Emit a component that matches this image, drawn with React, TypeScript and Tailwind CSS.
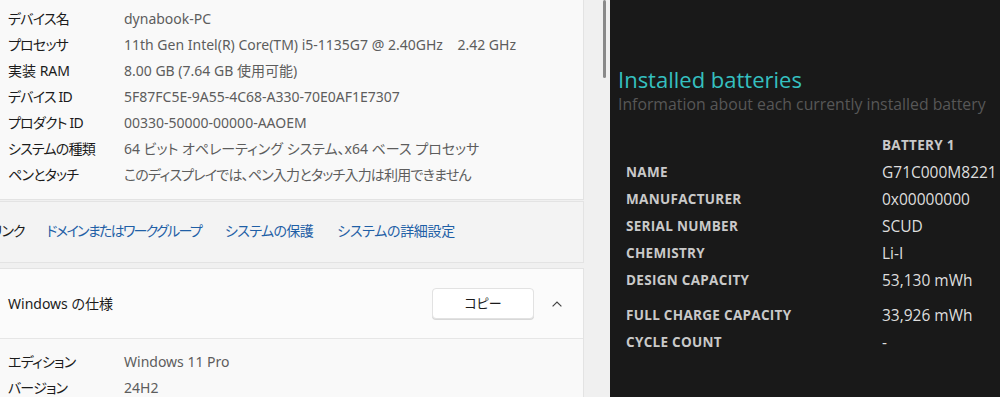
const jp = { fontFamily: '"Noto Sans", "Noto Sans CJK JP", sans-serif' };
const en = { fontFamily: '"Open Sans", "Noto Sans", sans-serif' };

// [label, value, tighten label, tighten value]
const specs: [string, string, boolean, boolean][] = [
  ["デバイス名", "dynabook-PC", true, false],
  ["プロセッサ", "11th Gen Intel(R) Core(TM) i5-1135G7 @ 2.40GHz    2.42 GHz", true, false],
  ["実装 RAM", "8.00 GB (7.64 GB 使用可能)", false, false],
  ["デバイス ID", "5F87FC5E-9A55-4C68-A330-70E0AF1E7307", true, false],
  ["プロダクト ID", "00330-50000-00000-AAOEM", true, false],
  ["システムの種類", "64 ビット オペレーティング システム、x64 ベース プロセッサ", true, false],
  ["ペンとタッチ", "このディスプレイでは、ペン入力とタッチ入力は利用できません", true, true],
];

const windowsSpecs: [string, string, boolean, boolean][] = [
  ["エディション", "Windows 11 Pro", true, false],
  ["バージョン", "24H2", true, false],
];

const battery = [
  ["NAME", "G71C000M8221", false],
  ["MANUFACTURER", "0x00000000", false],
  ["SERIAL NUMBER", "SCUD", false],
  ["CHEMISTRY", "Li-I", false],
  ["DESIGN CAPACITY", "53,130 mWh", false],
  ["FULL CHARGE CAPACITY", "33,926 mWh", true],
  ["CYCLE COUNT", "-", false],
] as const;

function SpecRow({ label, value, tl, tv }: { label: string; value: string; tl: boolean; tv: boolean }) {
  return (
    <div className="flex h-[26px] items-center text-[14px] whitespace-pre">
      <div className={`w-[116px] shrink-0 text-[#1b1b1b] ${tl ? "tracking-[-0.8px]" : ""}`}>{label}</div>
      <div className={`text-[#5d5d5d] ${tv ? "tracking-[-0.8px]" : ""}`}>{value}</div>
    </div>
  );
}

export default function App() {
  return (
    <div className="flex h-[397px] w-[1000px] overflow-hidden">
      {/* Settings page */}
      <div className="relative flex w-[610px] shrink-0 bg-[#f0f0f0] [font-feature-settings:'palt']" style={jp}>
        <div className="flex w-[584px] shrink-0 flex-col overflow-hidden">
          {/* Device specs card */}
          <div className="h-[200px] shrink-0 border-b border-r border-[#e3e3e3] bg-[#f9f9f9] px-2 pt-[5px]">
            {specs.map(([l, v, tl, tv]) => (
              <SpecRow key={l} label={l} value={v} tl={tl} tv={tv} />
            ))}
          </div>

          {/* Related links */}
          <div className="mt-[1px] flex h-[62px] shrink-0 items-center overflow-hidden border-y border-r border-[#e3e3e3] bg-[#f3f3f3] pb-[4px] text-[14px] whitespace-nowrap">
            <span className="ml-[-35px] shrink-0 tracking-[-1px] text-[#1b1b1b]">関連リンク</span>
            <span className="ml-[22px] shrink-0 tracking-[-1.7px] text-[#1f5fa6]">ドメインまたはワークグループ</span>
            <span className="ml-[24px] shrink-0 tracking-[-0.6px] text-[#1f5fa6]">システムの保護</span>
            <span className="ml-[24px] shrink-0 tracking-[-0.3px] text-[#1f5fa6]">システムの詳細設定</span>
          </div>

          {/* Windows specs */}
          <div className="mt-[5px] shrink-0 border-t border-r border-[#e3e3e3] bg-[#fbfbfb]">
            <div className="flex h-[70px] items-center border-b border-[#e6e6e6] pl-2 pr-[21px]">
              <span className="text-[14px] text-[#1b1b1b]">Windows の仕様</span>
              <button className="ml-auto flex h-[31px] w-[102px] items-center justify-center rounded-[4px] border border-[#e2e2e2] bg-white text-[13px] text-[#1b1b1b] shadow-[0_1px_0_#d8d8d8]">
                コピー
              </button>
              <svg className="ml-[18px]" width="10" height="6" viewBox="0 0 10 6" fill="none">
                <path d="M0.6 5.4 L5 1 L9.4 5.4" stroke="#444" strokeWidth="1.2" />
              </svg>
            </div>
            <div className="bg-[#f9f9f9] px-2 pt-[9px] pb-4">
              {windowsSpecs.map(([l, v, tl, tv]) => (
                <SpecRow key={l} label={l} value={v} tl={tl} tv={tv} />
              ))}
            </div>
          </div>
        </div>

        {/* Scrollbar */}
        <div className="ml-[19px] w-[3px]">
          <div className="h-[78px] w-[3px] rounded-full bg-[#8a8a8a]" />
        </div>
      </div>

      {/* Battery report */}
      <div className="flex-1 bg-[#191919] pl-2 pt-[64px]" style={en}>
        <h1 className="text-[22px] leading-[30px] whitespace-nowrap text-[#35c0c0]">Installed batteries</h1>
        <p className="mt-[-2px] text-[15.8px] leading-[24px] whitespace-nowrap text-[#575757]">
          Information about each currently installed battery
        </p>
        <div className="mt-[16px] pl-[8px]">
          <div className="flex h-[27px] items-center">
            <div className="w-[256px] shrink-0" />
            <div className="text-[13.5px] font-bold tracking-[0.3px] text-[#c9c9c9]">BATTERY 1</div>
          </div>
          {battery.map(([l, v, gap]) => (
            <div key={l} className={`flex h-[27px] items-center whitespace-nowrap ${gap ? "mt-[8px]" : ""}`}>
              <div className="w-[256px] shrink-0 text-[13.5px] font-bold tracking-[0.3px] text-[#c9c9c9]">{l}</div>
              <div className="text-[15.5px] text-[#dedede]">{v}</div>
            </div>
          ))}
        </div>
      </div>
    </div>
  );
}
